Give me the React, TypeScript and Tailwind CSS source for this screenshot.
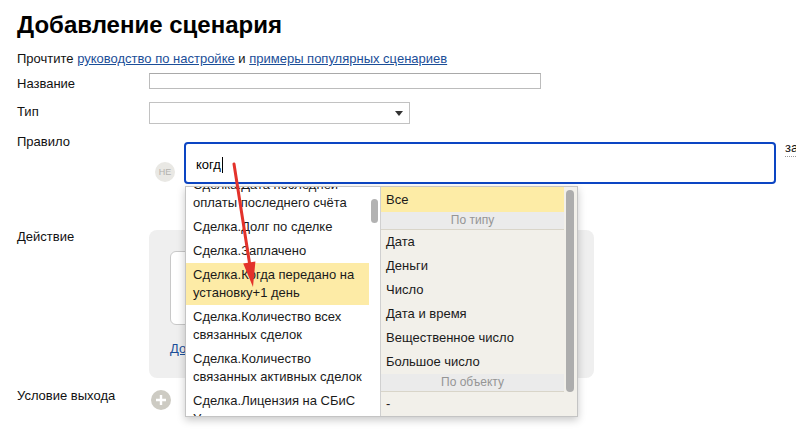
import React from "react";

const leftItems = [
  { text: "Сделка.Дата последней оплаты последнего счёта" },
  { text: "Сделка.Долг по сделке" },
  { text: "Сделка.Заплачено" },
  { text: "Сделка.Когда передано на установку+1 день", active: true },
  { text: "Сделка.Количество всех связанных сделок" },
  { text: "Сделка.Количество связанных активных сделок" },
  { text: "Сделка.Лицензия на СБиС Уведомления" },
];

const byType = ["Дата", "Деньги", "Число", "Дата и время", "Вещественное число", "Большое число"];

function Label({ children, className = "" }: { children: React.ReactNode; className?: string }) {
  return <div className={`w-[132px] shrink-0 text-[13px] leading-[18px] text-[#111] ${className}`}>{children}</div>;
}

function Suggest() {
  return (
    <div className="absolute left-[1px] top-[44px] z-10 flex h-[231px] w-[393px] border border-[#c4c4c4] shadow-[0_3px_8px_rgba(0,0,0,0.22)]">
      <div className="relative w-[195px] overflow-hidden border-r border-[#d0d0d0] bg-white">
        <div className="mt-[-14px]">
          {leftItems.map((it) => (
            <div
              key={it.text}
              className={`w-[183px] py-[3px] pl-[7px] pr-[4px] text-[13px] leading-[18px] text-[#1a1a1a] ${
                it.active ? "bg-[#fdeba6]" : ""
              }`}
            >
              {it.text}
            </div>
          ))}
        </div>
        <div className="absolute left-[185px] top-[12px] h-[24px] w-[7px] rounded-full bg-[#b2b2b2]" />
      </div>
      <div className="relative flex-1 bg-[#f2f0ea]">
        <div className="w-[183px]">
          <div className="h-[25px] bg-[#fdeca6] pl-[5px] text-[13px] leading-[25px] text-[#1a1a1a]">Все</div>
          <div className="h-[18px] border-b border-[#d9d5c9] bg-[#ebebeb] text-center text-[12px] leading-[17px] text-[#959595]">
            По типу
          </div>
          {byType.map((t) => (
            <div key={t} className="h-[24px] pl-[5px] text-[13px] leading-[24px] text-[#1a1a1a]">
              {t}
            </div>
          ))}
          <div className="h-[18px] border-b border-[#d9d5c9] bg-[#ebebeb] text-center text-[12px] leading-[17px] text-[#959595]">
            По объекту
          </div>
          <div className="h-[24px] pl-[5px] text-[13px] leading-[24px] text-[#1a1a1a]">-</div>
        </div>
        <div className="absolute left-[185px] top-[3px] h-[202px] w-[8px] rounded-full bg-[#adadad]" />
      </div>
    </div>
  );
}

export default function App() {
  return (
    <div
      className="relative h-[435px] w-[796px] overflow-hidden bg-white pl-[17px] pt-[11px] text-[#111]"
      style={{ fontFamily: '"Liberation Sans", Arial, sans-serif' }}
    >
      <h1 className="text-[24px] font-bold leading-[28px] text-black">Добавление сценария</h1>
      <p className="mt-[11px] text-[13px] leading-[18px]">
        Прочтите{" "}
        <a className="text-[#1b4e98] underline">руководство по настройке</a> и{" "}
        <a className="text-[#1b4e98] underline">примеры популярных сценариев</a>
      </p>

      <div className="mt-[5px] flex items-start">
        <Label className="pt-[2px]">Название</Label>
        <div className="h-[16px] w-[392px] border border-[#bcbcbc] border-t-[#a9a9a9] bg-white" />
      </div>

      <div className="mt-[9px] flex items-start">
        <Label className="pt-[1px]">Тип</Label>
        <div className="flex h-[22px] w-[261px] items-center justify-end border border-[#c2c2c2] bg-white pr-[6px]">
          <svg width="8" height="5" viewBox="0 0 8 5">
            <path d="M0 0h8L4 5z" fill="#333" />
          </svg>
        </div>
      </div>

      <div className="mt-[9px] flex items-start">
        <Label>Правило</Label>
        <div className="mt-[9px] flex items-start">
          <div className="ml-[6px] mt-[20px] flex h-[20px] w-[20px] items-center justify-center rounded-full bg-[#e9e8e4] text-[9px] leading-none text-[#b3b2ae]">
            НЕ
          </div>
          <div className="relative ml-[9px]">
            <div className="flex h-[42px] w-[592px] items-start rounded-[4px] border-2 border-[#0c45c3] bg-white pl-[10px] pt-[12px] text-[13px] leading-[18px] text-black">
              когд
              <span className="ml-[1px] mt-[1px] inline-block h-[16px] w-[1px] bg-black" />
            </div>
            <Suggest />
          </div>
          <span className="ml-[9px] mt-[-2px] whitespace-nowrap border-b border-dotted border-[#999] text-[13px] leading-[16px]">
            за
          </span>
        </div>
      </div>

      <div className="mt-[44px] flex items-start">
        <Label>Действие</Label>
        <div className="mt-[2px] h-[148px] w-[445px] rounded-[8px] bg-[#efefef] pl-[21px] pt-[21px]">
          <div className="h-[74px] w-[403px] rounded-[6px] border border-[#c8c8c8] bg-white" />
          <a className="mt-[15px] block text-[13px] leading-[18px] text-[#1b4e98] underline">Добавить действие</a>
        </div>
      </div>

      <div className="mt-[8px] flex items-start">
        <Label className="pt-[1px]">Условие выхода</Label>
        <div className="ml-[2px] mt-[4px] flex h-[20px] w-[20px] items-center justify-center rounded-full bg-[#cdcbc3]">
          <svg width="12" height="12" viewBox="0 0 12 12">
            <path d="M6 1v10M1 6h10" stroke="#fff" strokeWidth="2.4" />
          </svg>
        </div>
      </div>

      <svg className="pointer-events-none absolute left-0 top-0 z-20" width="796" height="435">
        <line x1="234" y1="164" x2="249.5" y2="263" stroke="#e3322b" strokeWidth="3" strokeLinecap="round" />
        <polygon points="253,287 243.2,263.4 255.4,261.5" fill="#e3322b" />
      </svg>
    </div>
  );
}
